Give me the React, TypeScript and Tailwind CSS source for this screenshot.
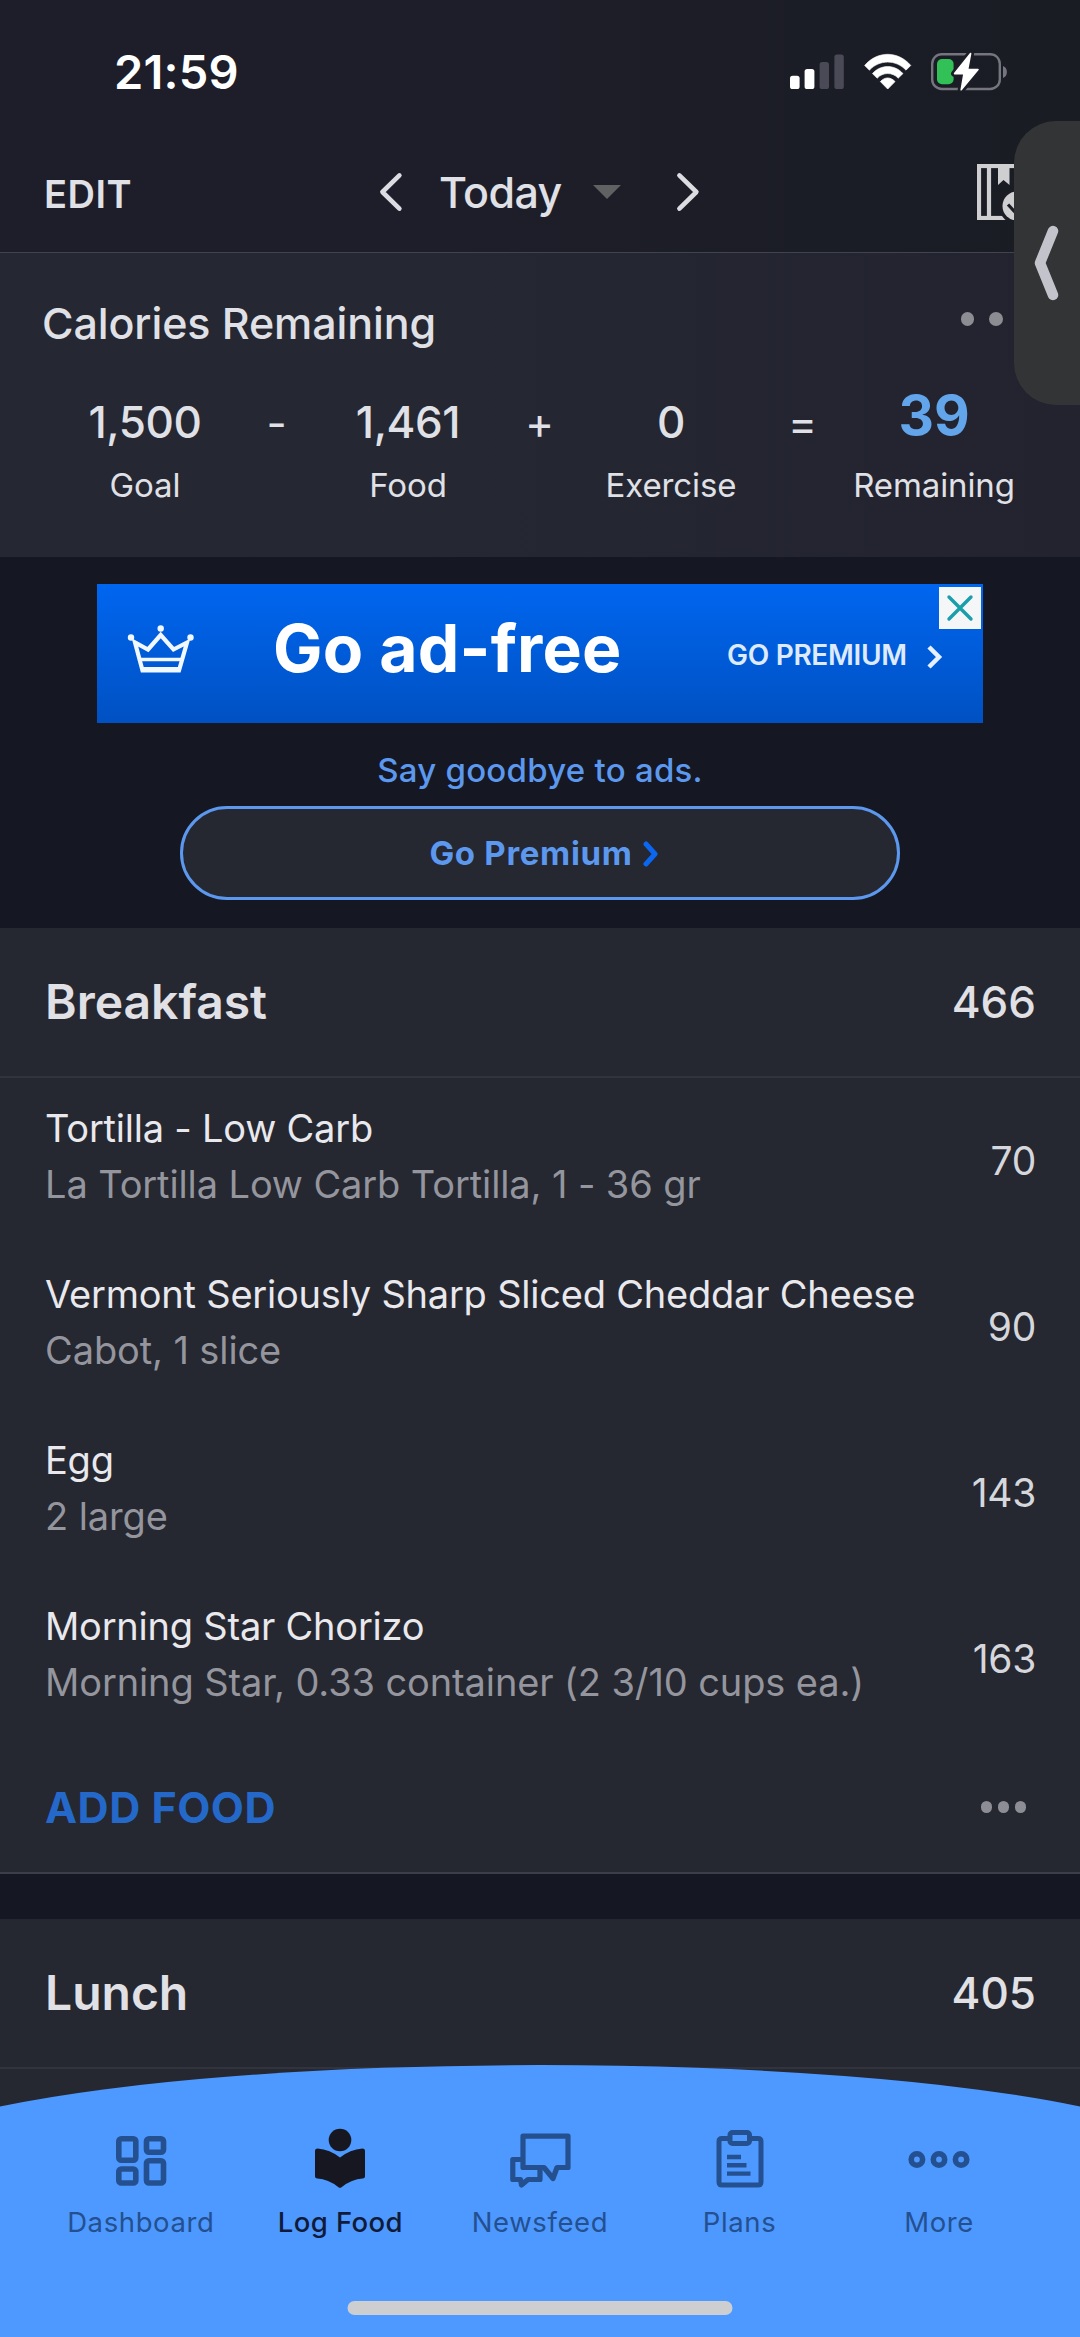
import type { ReactNode } from "react";

type Food = { name: string; detail: string; calories: number };

const breakfast: Food[] = [
  { name: "Tortilla - Low Carb", detail: "La Tortilla Low Carb Tortilla, 1 - 36 gr", calories: 70 },
  { name: "Vermont Seriously Sharp Sliced Cheddar Cheese", detail: "Cabot, 1 slice", calories: 90 },
  { name: "Egg", detail: "2 large", calories: 143 },
  { name: "Morning Star Chorizo", detail: "Morning Star, 0.33 container (2 3/10 cups ea.)", calories: 163 },
];

function StatusIcons() {
  return (
    <svg width="220" height="40" viewBox="789 52 220 40" fill="none">
      <rect x="790" y="75.7" width="9.6" height="13.3" rx="2.6" fill="#fff" />
      <rect x="804.6" y="69" width="9.8" height="20" rx="2.6" fill="#fff" />
      <rect x="819.6" y="62" width="9.4" height="27" rx="2.6" fill="#494a55" />
      <rect x="834.4" y="54.6" width="9.4" height="34.4" rx="2.6" fill="#494a55" />
      <path d="M864.6 65.4C877.6 50.6 897.8 50.6 910.8 65.4L906 70.2C896 59.4 879.4 59.4 869.4 70.2Z" fill="#fff" stroke="#fff" strokeWidth="0.6" strokeLinejoin="round" />
      <path d="M872.4 73.6C880.6 64.2 894.8 64.2 903 73.6L898.2 78.2C892.4 72 883 72 877.2 78.2Z" fill="#fff" stroke="#fff" strokeWidth="0.6" strokeLinejoin="round" />
      <path d="M880.4 81.6C884.8 76.8 890.6 76.8 895 81.6L887.7 89Z" fill="#fff" stroke="#fff" strokeWidth="0.8" strokeLinejoin="round" />
      <rect x="932.2" y="54.2" width="67.6" height="34.8" rx="9.5" stroke="#74757e" strokeWidth="2.4" />
      <path d="M1003 66C1008.2 67.6 1008.2 76.4 1003 78Z" fill="#74757e" />
      <rect x="937" y="59" width="16.6" height="25.2" rx="5" fill="#32c157" />
      <path d="M970.6 53.6L954.6 73.6H964L961.2 89.8L978 69.6H967.6Z" fill="#fff" stroke="#1c1d27" strokeWidth="7" strokeLinejoin="round" />
      <path d="M970.6 53.6L954.6 73.6H964L961.2 89.8L978 69.6H967.6Z" fill="#fff" stroke="#fff" strokeWidth="1.6" strokeLinejoin="round" />
    </svg>
  );
}

function Chevron({ dir }: { dir: "left" | "right" }) {
  return (
    <svg width="24" height="40" viewBox="0 0 24 40" fill="none" stroke="#dcdde2" strokeWidth="4.6" strokeLinecap="round" strokeLinejoin="round">
      <path d={dir === "left" ? "M20.4 3.4L3.4 20L20.4 36.6" : "M3.4 3.4L20.4 20L3.4 36.6"} />
    </svg>
  );
}

function DiaryIcon() {
  return (
    <svg width="56" height="56" viewBox="0 0 56 56" fill="none">
      <rect x="2" y="2" width="48" height="52" stroke="#cfcfd1" strokeWidth="4.200" />
      <path d="M12 2V54" stroke="#cfcfd1" strokeWidth="4.200" />
      <path d="M21 2H32.500V21L26.500 16L21 21Z" fill="#cfcfd1" />
      <circle cx="40" cy="42" r="18" fill="#1b1c24" />
      <circle cx="40" cy="42" r="14.500" fill="#cfcfd1" />
      <path d="M31 40.500L38 48L48 36" stroke="#1b1c24" strokeWidth="3.200" />
    </svg>
  );
}

function Value({ value, label }: { value: string; label: string }) {
  return (
    <div className="flex w-[176px] flex-col items-center">
      <div className="text-[44px] leading-[52px] font-medium tracking-[-0.4px]">{value}</div>
      <div className="mt-[12px] text-[33px] leading-[50px] tracking-[-0.1px]">{label}</div>
    </div>
  );
}

function Operator({ children }: { children: ReactNode }) {
  return <div className="w-[87px] text-center text-[44px] leading-[54px]">{children}</div>;
}

function Summary() {
  return (
    <section className="h-[304px] bg-linear-to-r from-[#252732] from-40% to-[#22232e] text-[#e0e1e6]">
      <div className="flex h-[139px] items-center justify-between pr-[49px] pl-[42px]">
        <h1 className="text-[43px] leading-[52px] font-medium tracking-[-0.1px]">Calories Remaining</h1>
        <div className="mt-[-7px] flex gap-[15px]">
          <i className="size-[13.500px] rounded-full bg-[#8c8d92]" />
          <i className="size-[13.500px] rounded-full bg-[#8c8d92]" />
          <i className="size-[13.500px] rounded-full bg-[#8c8d92]" />
        </div>
      </div>
      <div className="flex pt-[4px] pl-[57px]">
        <Value value="1,500" label="Goal" />
        <Operator>-</Operator>
        <Value value="1,461" label="Food" />
        <Operator>+</Operator>
        <Value value="0" label="Exercise" />
        <Operator>=</Operator>
        <div className="mt-[-10px] flex w-[176px] flex-col items-center">
          <div className="text-[55px] leading-[58px] font-bold text-[#62a5eb]">39</div>
          <div className="mt-[16px] text-[33px] leading-[50px] tracking-[-0.1px]">Remaining</div>
        </div>
      </div>
    </section>
  );
}

function AdBanner() {
  return (
    <section className="flex h-[371px] flex-col items-center bg-[#151722] pt-[27px]">
      <div className="relative flex h-[139px] w-[886px] items-center bg-linear-to-b from-[#0066f0] to-[#0051c2] text-white">
        <svg className="mt-[-9px] ml-[29px] shrink-0" width="70" height="50" viewBox="0 0 70 50" fill="none" stroke="#f2f8ff" strokeWidth="4.200" strokeLinejoin="miter">
          <path d="M9 18.500L16.500 46.500H53L61 18.500L47.500 25.500L34.700 11L22 25.500Z" />
          <path d="M13 35.500H57" strokeWidth="3.600" />
          <path d="M16 45.500H54" strokeWidth="5" />
          <g fill="#f2f8ff" stroke="none">
            <circle cx="34.700" cy="4.500" r="3.200" />
            <circle cx="5" cy="13.500" r="3.200" />
            <circle cx="64.500" cy="13.500" r="3.200" />
          </g>
        </svg>
        <div className="mt-[-11px] ml-[77px] w-[454px] shrink-0 text-[66px] leading-[80px] font-bold tracking-[0.2px] whitespace-nowrap">Go ad-free</div>
        <div className="mt-[2px] w-[198px] shrink-0 text-[28px] leading-[36px] font-semibold tracking-[-0.3px] whitespace-nowrap text-[#deebff]">GO PREMIUM</div>
        <svg className="mt-[7px] shrink-0" width="18" height="26" viewBox="0 0 18 26" fill="none" stroke="#e6f0ff" strokeWidth="4.500">
          <path d="M4 3L14 13L4 23" />
        </svg>
        <div className="absolute top-[3px] right-[2px] flex size-[42px] items-center justify-center bg-[#f5f6f7]">
          <svg width="28" height="28" viewBox="0 0 28 28" stroke="#1a9eab" strokeWidth="3.400" strokeLinecap="round">
            <path d="M3 3L25 25M25 3L3 25" />
          </svg>
        </div>
      </div>
      <p className="mt-[27px] text-[33px] leading-[40px] font-medium tracking-[0.25px] text-[#5b98ee]">Say goodbye to ads.</p>
      <button className="mt-[16px] flex h-[94px] w-[720px] items-center justify-center gap-[10px] rounded-full border-[3px] border-[#5b98ee] bg-[#252731] pt-[2px] pl-[8px] text-[33px] font-bold tracking-[0.7px] text-[#5b98ee]">
        Go Premium
        <svg width="16" height="26" viewBox="0 0 16 26" fill="none" stroke="#0b67ef" strokeWidth="5" strokeLinecap="round" strokeLinejoin="round">
          <path d="M3 3L12 13L3 23" />
        </svg>
      </button>
    </section>
  );
}

function MealHeader({ name, total }: { name: string; total: number }) {
  return (
    <div className="flex h-[150px] items-center justify-between border-b-2 border-[#31333d] pr-[44px] pl-[45px] text-[#e0e0e5]">
      <h2 className="text-[48px] leading-[60px] font-semibold">{name}</h2>
      <span className="text-[44px] leading-[60px] font-medium">{total}</span>
    </div>
  );
}

function FoodRow({ food }: { food: Food }) {
  return (
    <div className="flex h-[166px] items-center justify-between pr-[44px] pl-[45px]">
      <div className="mt-[-9px] text-[38px] leading-[55.500px] whitespace-nowrap">
        <div className="tracking-[-0.22px] text-[#e9e9ed]">{food.name}</div>
        <div className="tracking-[-0.11px] text-[#94959d]">{food.detail}</div>
      </div>
      <span className="text-[39px] tracking-[-0.3px] text-[#d6d7dc]">{food.calories}</span>
    </div>
  );
}

function NavItem({ label, active, children }: { label: string; active?: boolean; children: ReactNode }) {
  return (
    <div className={active ? "flex flex-1 flex-col items-center text-[#111a38]" : "flex flex-1 flex-col items-center text-[#245090]"}>
      {children}
      <span className={active ? "mt-[12px] text-[27.500px] leading-[36px] font-medium tracking-[0.4px]" : "mt-[12px] text-[27.500px] leading-[36px] tracking-[0.6px]"}>
        {label}
      </span>
    </div>
  );
}

function TabBar() {
  return (
    <nav className="absolute inset-x-0 bottom-0 h-[273px]">
      <svg className="absolute inset-0" width="1080" height="273" viewBox="0 0 1080 273">
        <path d="M0 42.500A660 97.500 0 0 1 1080 42.500V273H0Z" fill="#4d99ff" />
      </svg>
      <div className="relative flex px-[41px] pt-[64px]">
        <NavItem label="Dashboard">
          <svg width="64" height="64" viewBox="0 0 64 64" fill="none" stroke="currentColor" strokeWidth="5.600">
            <rect x="9.800" y="10.800" width="17" height="21.500" rx="2.500" />
            <rect x="9.800" y="41" width="17" height="14" rx="2.500" />
            <rect x="37.500" y="10.800" width="17" height="13.500" rx="2.500" />
            <rect x="37.500" y="32.800" width="17" height="22.200" rx="2.500" />
          </svg>
        </NavItem>
        <NavItem label="Log Food" active>
          <svg width="64" height="64" viewBox="0 0 64 64" fill="#171722">
            <circle cx="32" cy="12" r="11.300" />
            <path d="M9.500 20.500Q22 21.500 32 29.500Q42 21.500 54.500 20.500Q57 20.500 57 23V48Q57 50.500 54.500 50.500Q44 51 33.500 59.200Q32 60.400 30.500 59.200Q20 51 9.500 50.500Q7 50.500 7 48V23Q7 20.500 9.500 20.500Z" />
          </svg>
        </NavItem>
        <NavItem label="Newsfeed">
          <svg width="64" height="64" viewBox="0 0 64 64" fill="none" stroke="currentColor" strokeWidth="5.200" strokeLinejoin="round">
            <path d="M15 8.200H60V39.500H49L45 50.500L36 39.500H15Z" />
            <path d="M15 31.500H4.800V51.500H12.500L13.500 57L20 51.500H32V40" />
          </svg>
        </NavItem>
        <NavItem label="Plans">
          <svg width="64" height="64" viewBox="0 0 64 64" fill="none" stroke="currentColor" strokeWidth="5">
            <path d="M21 10.500H14Q11 10.500 11 13.500V54Q11 57 14 57H50Q53 57 53 54V13.500Q53 10.500 50 10.500H43" />
            <rect x="22" y="4.500" width="19.500" height="11" rx="2.500" />
            <path d="M19 29H33M19 37.300H38.500M19 45.600H42.500" strokeWidth="4.400" />
          </svg>
        </NavItem>
        <NavItem label="More">
          <svg width="64" height="64" viewBox="0 0 64 64" fill="none" stroke="currentColor" strokeWidth="5.600">
            <circle cx="9.900" cy="31.500" r="5.700" />
            <circle cx="32" cy="31.500" r="5.700" />
            <circle cx="54.100" cy="31.500" r="5.700" />
          </svg>
        </NavItem>
      </div>
      <div className="absolute bottom-[22px] left-1/2 h-[14px] w-[385px] -translate-x-1/2 rounded-full bg-[#cdcecf]" />
    </nav>
  );
}

export default function App() {
  return (
    <div className="relative h-[2337px] w-[1080px] overflow-hidden bg-[#252731] font-['Inter',sans-serif]">
      <header className="h-[253px] border-b border-[#42444d] bg-linear-to-r from-[#1d1e29] from-40% to-[#1a1c24]">
        <div className="flex h-[144px] items-center justify-between pr-[71px] pl-[114px]">
          <span className="text-[47px] leading-[56px] font-semibold tracking-[0.2px] text-white">21:59</span>
          <StatusIcons />
        </div>
        <div className="flex h-[96px] items-center text-[#e0e1e6]">
          <span className="w-[379px] pt-[4px] pl-[44px] text-[38px] font-semibold tracking-[0.5px]">EDIT</span>
          <Chevron dir="left" />
          <span className="ml-[36px] text-[43px] leading-[52px] font-medium tracking-[-0.6px]">Today</span>
          <svg className="ml-[31px]" width="28" height="14" viewBox="0 0 28 14">
            <path d="M0 0H28L14 14Z" fill="#5f6162" />
          </svg>
          <span className="ml-[55px]">
            <Chevron dir="right" />
          </span>
          <span className="ml-auto pr-[47px]">
            <DiaryIcon />
          </span>
        </div>
      </header>
      <Summary />
      <AdBanner />
      <section className="bg-[#252731]">
        <MealHeader name="Breakfast" total={466} />
        {breakfast.map((food) => (
          <FoodRow key={food.name} food={food} />
        ))}
        <div className="flex h-[132px] items-center justify-between border-b-2 border-[#3d3f48] px-[45px]">
          <span className="text-[43px] font-bold tracking-[0.5px] text-[#2469ca]">ADD FOOD</span>
          <div className="mr-[9px] flex gap-[5.500px]">
            <i className="size-[11.500px] rounded-full bg-[#8c8d95]" />
            <i className="size-[11.500px] rounded-full bg-[#8c8d95]" />
            <i className="size-[11.500px] rounded-full bg-[#8c8d95]" />
          </div>
        </div>
      </section>
      <div className="h-[45px] bg-[#151722]" />
      <MealHeader name="Lunch" total={405} />
      <TabBar />
      <div className="absolute top-[121px] right-0 flex h-[284px] w-[66px] items-center rounded-l-[42px] bg-[#333436] pl-[19px]">
        <svg width="28" height="78" viewBox="0 0 28 78" fill="none" stroke="#c3c3cc" strokeWidth="10.500" strokeLinecap="round" strokeLinejoin="round">
          <path d="M20 7L7 39L20 71" />
        </svg>
      </div>
    </div>
  );
}
